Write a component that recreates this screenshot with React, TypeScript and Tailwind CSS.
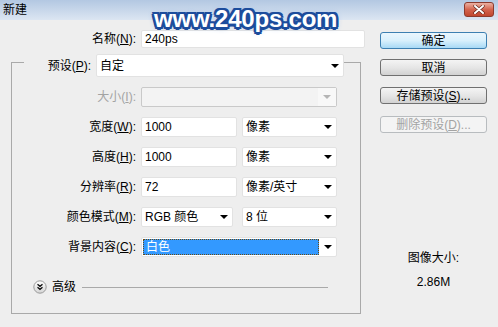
import React from "react"

const FONT = "font-['Liberation_Sans','Noto_Sans_CJK_SC',sans-serif]"

function Mn({ pre, k, post = "" }: { pre: string; k: string; post?: string }) {
  return (
    <span>
      {pre}(<span className="underline">{k}</span>){post}
    </span>
  )
}

function Arrow({ disabled }: { disabled?: boolean }) {
  return (
    <span
      className={`block w-0 h-0 border-l-[4px] border-r-[4px] border-t-[4px] border-l-transparent border-r-transparent ${
        disabled ? "border-t-[#b5b5b5]" : "border-t-black"
      }`}
    />
  )
}

function Select({ text, className = "" }: { text: string; className?: string }) {
  return (
    <div
      className={`h-[20px] bg-white border border-[#e2e2e2] rounded-[2px] flex items-center justify-between pl-[3px] pr-[4px] ${className}`}
    >
      <span>{text}</span>
      <Arrow />
    </div>
  )
}

function Input({ value, className = "" }: { value: string; className?: string }) {
  return (
    <div className={`h-[20px] bg-white border border-[#e2e2e2] rounded-[2px] flex items-center pl-[3px] ${className}`}>
      {value}
    </div>
  )
}

function Row({ label, children }: { label: React.ReactNode; children: React.ReactNode }) {
  return (
    <div className="flex items-center h-[20px]">
      <div className="w-[124px] text-right">{label}</div>
      <div className="ml-[5px] flex items-center">{children}</div>
    </div>
  )
}

function Button({ children, variant = "normal" }: { children: React.ReactNode; variant?: "default" | "normal" | "disabled" }) {
  const look =
    variant === "default"
      ? "border-[#3c7fb1] bg-gradient-to-b from-[#eaf6fd] via-[#d9f0fc] to-[#a7d9f5] text-black"
      : variant === "disabled"
      ? "border-[#b8bcbf] bg-[#f4f4f4] text-[#a3a3a3]"
      : "border-[#707070] bg-gradient-to-b from-[#f4f4f4] via-[#e6e6e6] to-[#d2d2d2] text-black"
  return (
    <div className={`h-[17px] border rounded-[3px] flex items-center justify-center ${look}`}>{children}</div>
  )
}

export default function App() {
  return (
    <div className={`w-[498px] h-[327px] bg-[#eeeeee] relative overflow-hidden text-[12px] leading-[14px] text-black ${FONT}`}>
      {/* title bar */}
      <div className="h-[20px] flex items-start bg-gradient-to-b from-[#b3c8e2] to-[#dce6f2]">
        <span className="ml-[3px] mt-[3px]">新建</span>
        <div className="ml-auto mr-[4px] mt-[2px] w-[30px] h-[15px] rounded-[3px] border border-[#8c3b2e] bg-gradient-to-b from-[#eab0a2] via-[#d4644e] to-[#c0472f] flex items-center justify-center">
          <svg width="12" height="9" viewBox="0 0 12 9">
            <path d="M2 1 L10 8 M10 1 L2 8" stroke="#5a1f15" strokeWidth="3.2" strokeLinecap="round" />
            <path d="M2 1 L10 8 M10 1 L2 8" stroke="#ffffff" strokeWidth="2" strokeLinecap="round" />
          </svg>
        </div>
      </div>

      {/* watermark */}
      <span className="absolute left-[154px] top-[7px] text-[24px] leading-none font-bold text-white font-['Liberation_Sans',sans-serif] tracking-[-0.2px] [text-shadow:2.5px_0_#1c4c9c,-2.5px_0_#1c4c9c,0_2.5px_#1c4c9c,0_-2.5px_#1c4c9c,2px_2px_#1c4c9c,-2px_-2px_#1c4c9c,2px_-2px_#1c4c9c,-2px_2px_#1c4c9c,0_0_6px_#8fb3e4]">
        www.240ps.com
      </span>

      <div className="flex">
        {/* left */}
        <div className="w-[366px]">
          <div className="mt-[10px] flex items-center h-[18px]">
            <div className="w-[136px] text-right">
              <Mn pre="名称" k="N" post=":" />
            </div>
            <Input value="240ps" className="ml-[5px] w-[224px] !h-[18px]" />
          </div>

          <div className="mt-[14px] ml-[11px] w-[350px] h-[252px] border border-[#a9a9a9] flex flex-col">
            <div className="-mt-[9px] ml-[12px] w-[320px] h-[23px] bg-[#eeeeee] flex items-center">
              <div className="w-[67px] text-right">
                <Mn pre="预设" k="P" post=":" />
              </div>
              <Select text="自定" className="ml-[5px] w-[248px] !h-[23px]" />
            </div>

            <div className="mt-[10px] flex flex-col gap-[10px]">
              <Row label={<span className="text-[#a3a3a3]"><Mn pre="大小" k="I" post=":" /></span>}>
                <div className="w-[196px] h-[20px] bg-[#f3f3f3] border border-[#c9c9c9] rounded-[2px] flex items-center justify-end">
                  <div className="w-[18px] h-full bg-[#f8f8f8] flex items-center justify-center">
                    <Arrow disabled />
                  </div>
                </div>
              </Row>
              <Row label={<Mn pre="宽度" k="W" post=":" />}>
                <Input value="1000" className="w-[96px]" />
                <Select text="像素" className="ml-[5px] w-[95px]" />
              </Row>
              <Row label={<Mn pre="高度" k="H" post=":" />}>
                <Input value="1000" className="w-[96px]" />
                <Select text="像素" className="ml-[5px] w-[95px]" />
              </Row>
              <Row label={<Mn pre="分辨率" k="R" post=":" />}>
                <Input value="72" className="w-[96px]" />
                <Select text="像素/英寸" className="ml-[5px] w-[95px]" />
              </Row>
              <Row label={<Mn pre="颜色模式" k="M" post=":" />}>
                <Select text="RGB 颜色" className="w-[92px]" />
                <Select text="8 位" className="ml-[9px] w-[95px]" />
              </Row>
              <Row label={<Mn pre="背景内容" k="C" post=":" />}>
                <div className="w-[196px] h-[20px] bg-white border border-[#e2e2e2] rounded-[2px] flex items-center pl-[1px] pr-[4px]">
                  <div className="w-[176px] h-[16px] bg-[#3399ff] border border-dotted border-[#6b4a10] text-white flex items-center pl-[2px]">
                    白色
                  </div>
                  <div className="ml-auto flex items-center">
                    <Arrow />
                  </div>
                </div>
              </Row>
            </div>

            <div className="mt-[23px] h-[14px] flex items-center">
              <svg className="ml-[21px]" width="14" height="14" viewBox="0 0 14 14">
                <defs>
                  <linearGradient id="adv" x1="0" y1="0" x2="0" y2="1">
                    <stop offset="0" stopColor="#ffffff" />
                    <stop offset="1" stopColor="#d4d4d4" />
                  </linearGradient>
                </defs>
                <circle cx="7" cy="7" r="6.2" fill="url(#adv)" stroke="#9a9a9a" />
                <path d="M4.5 4.3 L7 6.3 L9.5 4.3 M4.5 7.3 L7 9.3 L9.5 7.3" stroke="#111" strokeWidth="1.3" fill="none" />
              </svg>
              <span className="ml-[5px]">高级</span>
              <div className="ml-[6px] mr-[32px] flex-1 h-px bg-[#a9a9a9]" />
            </div>
          </div>
        </div>

        {/* right */}
        <div className="ml-[14px] w-[107px] flex flex-col">
          <div className="mt-[12px]">
            <Button variant="default">确定</Button>
          </div>
          <div className="mt-[10px]">
            <Button>取消</Button>
          </div>
          <div className="mt-[11px]">
            <Button>
              存储预设(<span className="underline">S</span>)...
            </Button>
          </div>
          <div className="mt-[12px]">
            <Button variant="disabled">
              删除预设(<span className="underline">D</span>)...
            </Button>
          </div>
          <div className="mt-[118px] text-center">图像大小:</div>
          <div className="mt-[10px] text-center">2.86M</div>
        </div>
      </div>
    </div>
  )
}
